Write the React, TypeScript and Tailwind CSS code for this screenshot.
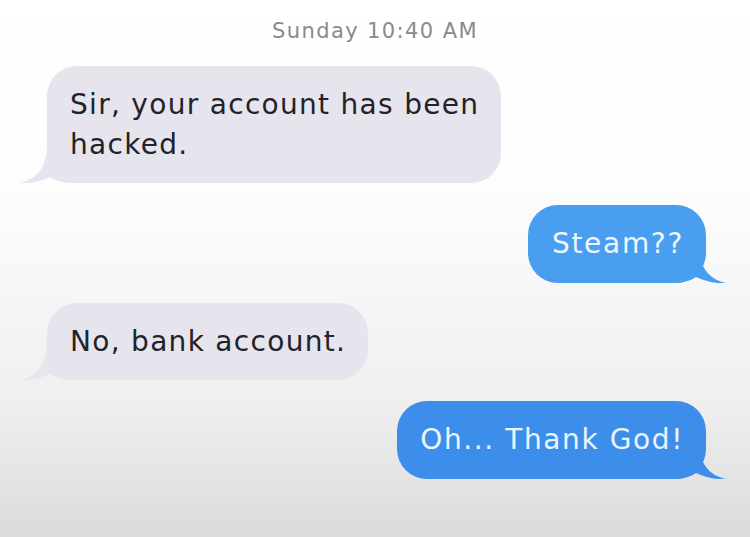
import React from "react";

const font = { fontFamily: '"DejaVu Sans", Verdana, sans-serif' };

function LeftTail({ color }: { color: string }) {
  return (
    <svg
      className="absolute bottom-0 left-[-27px] h-[40px] w-[56px]"
      viewBox="0 0 56 40"
      aria-hidden
    >
      <path
        d="M27 0 C27 24 18 36 0 40 C10 41 22 38 30 34 C36 38 44 40 56 40 L56 0 Z"
        fill={color}
      />
    </svg>
  );
}

function RightTail({ color }: { color: string }) {
  return (
    <svg
      className="absolute bottom-0 right-[-20px] h-[40px] w-[56px] -scale-x-100"
      viewBox="0 0 56 40"
      aria-hidden
    >
      <path
        d="M27 0 C27 24 18 36 0 40 C10 41 22 38 30 34 C36 38 44 40 56 40 L56 0 Z"
        fill={color}
      />
    </svg>
  );
}

export default function App() {
  return (
    <div
      className="flex h-[537px] w-[750px] flex-col overflow-hidden bg-[linear-gradient(to_bottom,#ffffff_0%,#fdfdfd_35%,#efefef_75%,#dbdbdb_100%)] pt-[18px]"
      style={font}
    >
      <div className="h-[26px] text-center text-[21px] leading-[26px] tracking-[1.4px] text-[#8a8a8a]">
        Sunday 10:40 AM
      </div>

      <div className="relative ml-[47px] mt-[22px] self-start whitespace-nowrap rounded-[30px] bg-[#e6e5ee] pl-[23px] pr-[22px] py-[19px] text-[28px] leading-[39.5px] tracking-[1.3px] text-[#222228]">
        <LeftTail color="#e6e5ee" />
        <span className="relative">
          Sir, your account has been
          <br />
          hacked.
        </span>
      </div>

      <div className="relative mr-[44px] mt-[22px] self-end whitespace-nowrap rounded-[30px] bg-[#4a9ef0] pl-[24px] pr-[22px] py-[19px] text-[28px] leading-[39.5px] tracking-[1.7px] text-[#eef7ff]">
        <RightTail color="#4a9ef0" />
        <span className="relative">Steam??</span>
      </div>

      <div className="relative ml-[47px] mt-[20px] self-start whitespace-nowrap rounded-[30px] bg-[#e6e5ee] pl-[23px] pr-[22px] py-[19px] text-[28px] leading-[39.5px] tracking-[1.3px] text-[#222228]">
        <LeftTail color="#e6e5ee" />
        <span className="relative">No, bank account.</span>
      </div>

      <div className="relative mr-[44px] mt-[21px] self-end whitespace-nowrap rounded-[30px] bg-[#3d8eea] pl-[23px] pr-[22px] py-[19px] text-[28px] leading-[39.5px] tracking-[1.6px] text-[#eaf4ff]">
        <RightTail color="#3d8eea" />
        <span className="relative">Oh... Thank God!</span>
      </div>
    </div>
  );
}
